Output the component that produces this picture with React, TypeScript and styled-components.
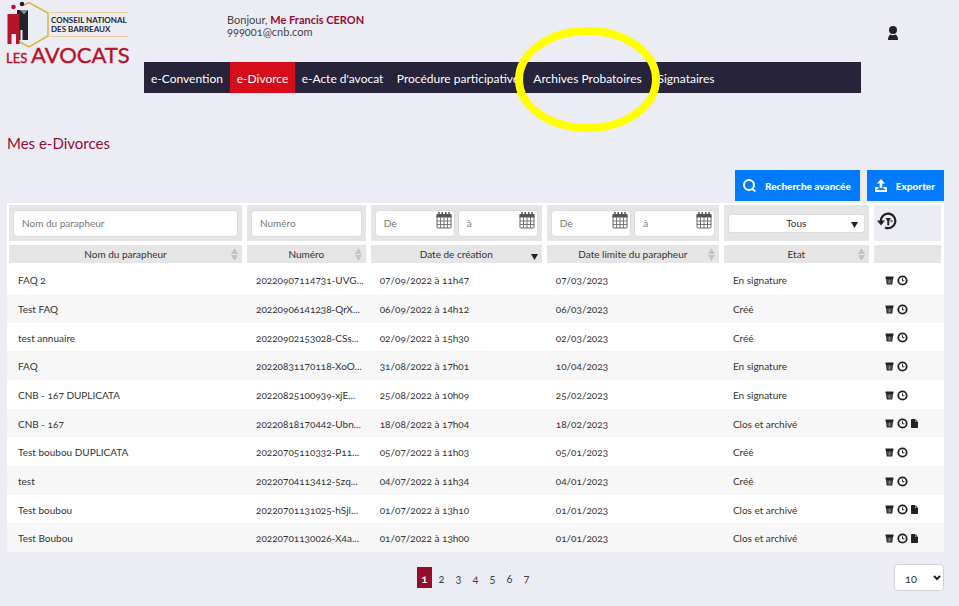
import React from "react";
import styled, { createGlobalStyle } from "styled-components";

const GlobalStyle = createGlobalStyle`
  * { box-sizing: border-box; }
  body {
    margin: 0;
    background: #ececf5;
    color: #333;
    font-family: Lato, "Noto Sans", sans-serif;
    font-size: 10px;
    font-variant-numeric: oldstyle-nums;
  }
  button, input, select { font: inherit; color: inherit; }
`;

const Page = styled.div`
  padding: 0 15px 0 7px;
`;

const Header = styled.header`
  display: flex;
  align-items: flex-start;
  height: 62px;
`;

const Logo = styled.a`
  width: 122px;
  margin-right: 98px;
  flex: none;
`;

const LogoDrawing = styled.svg`
  display: block;
  overflow: visible;
`;

const Greeting = styled.div`
  margin-top: 14px;
  flex: 1;
  color: #444;
  font-size: 11px;
  line-height: 12px;
  strong { color: #970b33; }
`;

const UserButton = styled.button`
  margin: 26px 46px 0 0;
  padding: 0;
  border: 0;
  background: none;
  line-height: 0;
`;

const Nav = styled.nav`
  display: flex;
  height: 31px;
  margin: 0 83px 0 137px;
  background: #26233b;
`;

const NavLink = styled.a<{ $width: number; $active?: boolean }>`
  position: relative;
  display: flex;
  flex: 0 0 ${(p) => p.$width}px;
  align-items: center;
  justify-content: center;
  padding-top: 2px;
  color: #fff;
  background: ${(p) => (p.$active ? "#d60d1b" : "transparent")};
  font-size: 12px;
  text-decoration: none;
  white-space: nowrap;
`;

const Highlight = styled.svg`
  position: absolute;
  z-index: 1;
  top: -35px;
  left: -11px;
  pointer-events: none;
`;

const Title = styled.h1`
  margin: 40px 0 17px;
  color: #970b33;
  font-size: 15px;
  font-weight: 400;
  line-height: 20px;
`;

const Toolbar = styled.div`
  display: flex;
  justify-content: flex-end;
  gap: 7px;
`;

const ActionButton = styled.button`
  display: flex;
  align-items: center;
  gap: 9px;
  height: 31px;
  padding: 0 9px 0 8px;
  border: 0;
  background: #007bff;
  color: #fff;
  font-weight: 900;
`;

const Table = styled.table`
  width: 100%;
  margin-top: 2px;
  border-spacing: 0;
  table-layout: fixed;
  background: #fff;
`;

const FilterCell = styled.td<{ $plain?: boolean }>`
  height: 40px;
  padding: 0 4px;
  border: solid #fff;
  border-width: 2px 3px 2px 2px;
  background: ${(p) => (p.$plain ? "#ececf5" : "#e5e5e5")};
`;

const HeadCell = styled.th`
  position: relative;
  height: 22px;
  padding: 0;
  border: solid #fff;
  border-width: 2px 3px 2px 2px;
  background: #e5e5e5;
  font-weight: 400;
  white-space: nowrap;
`;

const SortIcon = styled.svg`
  position: absolute;
  top: 3px;
  right: 4px;
`;

const Fields = styled.div`
  display: flex;
  gap: 3px;
`;

const Field = styled.label`
  position: relative;
  flex: 1;
  min-width: 0;
`;

const FieldInput = styled.input`
  display: block;
  width: 100%;
  height: 27px;
  padding: 0 8px;
  border: 1px solid #dcdcdc;
  border-radius: 4px;
  background: #fff;
  &::placeholder { color: #777; opacity: 1; }
`;

const CalendarIcon = styled.svg`
  position: absolute;
  top: 2px;
  right: 3px;
`;

const StateSelect = styled.select`
  display: block;
  width: 100%;
  height: 19px;
  padding: 0;
  border: 1px solid #dcdcdc;
  border-radius: 3px;
  background: #fff;
  appearance: none;
  text-align: center;
  text-align-last: center;
`;

const SelectArrow = styled.svg`
  position: absolute;
  top: 8px;
  right: 7px;
  pointer-events: none;
`;

const IconButton = styled.button`
  display: block;
  padding: 0;
  border: 0;
  background: none;
  line-height: 0;
`;

const ResetButton = styled(IconButton)`
  margin: 0 0 4px -1px;
`;

const Row = styled.tr`
  height: 29px;
  &:nth-child(3n) { height: 28px; }
  &:nth-child(even) { background: #f7f7f7; }
`;

const Cell = styled.td`
  padding: 1px 0 0 11px;
  overflow: hidden;
  white-space: nowrap;
`;

const Actions = styled.div`
  display: flex;
  gap: 3px;
  padding-left: 2px;
`;

const Footer = styled.footer`
  display: grid;
  grid-template-columns: 1fr auto 1fr;
  padding-top: 12px;
`;

const Pages = styled.nav`
  display: flex;
  gap: 2px;
  grid-column: 2;
  padding-top: 3px;
`;

const PageLink = styled.a<{ $current?: boolean }>`
  width: 15px;
  height: 21px;
  color: ${(p) => (p.$current ? "#fff" : "#444")};
  background: ${(p) => (p.$current ? "#970b2b" : "transparent")};
  font-size: 11px;
  font-weight: ${(p) => (p.$current ? 700 : 400)};
  line-height: 23px;
  text-align: center;
  text-decoration: none;
`;

const SizeSelect = styled.div`
  position: relative;
  justify-self: end;
  width: 50px;
  font-size: 11px;
  select {
    width: 100%;
    height: 27px;
    padding: 2px 10px 0;
    border: 1px solid #d2d2d8;
    border-radius: 4px;
    background: #fff;
    appearance: none;
  }
  svg { position: absolute; top: 11px; right: 3px; pointer-events: none; }
`;

const ink = "#222";

function LogoMark() {
  return (
    <LogoDrawing width="122" height="66" viewBox="7 0 122 66" role="img" aria-label="Conseil national des barreaux, Les Avocats">
      <path d="M24 5 29 2.500 48 13V36L29 47 18 41" fill="none" stroke="#dcb43c" strokeWidth="1.500" />
      <path d="M48 12.500H128M48 36.500H128" stroke="#e6d29a" />
      <path d="M17 10H28V40H22.500V30H20.500V40H17Z" fill="#24222b" />
      <path d="M20 10 24 14.500 28 10Z" fill="#8b8890" />
      <path d="M7.500 14H19.500V44H16V34H11.500V44H7.500Z" fill="#b5152b" />
      <circle cx="13.500" cy="7" r="2.300" fill="#b5152b" />
      <circle cx="22" cy="4" r="2.300" fill="#24222b" />
      <g fontFamily="Lato, sans-serif" fontWeight="700" fill="#26242c" fontSize="8">
        <text x="51" y="23">CONSEIL NATIONAL</text>
        <text x="51" y="32">DES BARREAUX</text>
      </g>
      <g fontFamily="Lato, sans-serif" fill="#b5152b" stroke="#b5152b" strokeWidth=".4">
        <text x="6" y="63" fontSize="13">LES</text>
        <text x="31" y="63" fontSize="22">AVOCATS</text>
      </g>
    </LogoDrawing>
  );
}

function Calendar() {
  return (
    <CalendarIcon width="16" height="17" viewBox="0 0 16 17" aria-hidden="true">
      <rect x="1" y="3" width="14" height="13" rx="1" fill="#fff" stroke="#666" />
      <path d="M.5 2H15.500V5.500H.5Z" fill="#555" />
      <path d="M3 0V3M6.300 0V3M9.700 0V3M13 0V3" stroke="#555" strokeWidth="1.500" />
      <path d="M4.500 5V16M8 5V16M11.500 5V16M1 9H15M1 12.500H15" stroke="#777" />
    </CalendarIcon>
  );
}

function DateRange({ name }: { name: string }) {
  return (
    <Fields>
      {["De", "à"].map((text) => (
        <Field key={text}>
          <FieldInput placeholder={text} aria-label={`${name} ${text}`} />
          <Calendar />
        </Field>
      ))}
    </Fields>
  );
}

function Trash() {
  return (
    <svg width="9" height="11" viewBox="0 0 9 11" aria-hidden="true">
      <path d="M.5 1.500H8.500V3.500H8L7.300 9.500H1.700L1 3.500H.5Z" fill={ink} />
      <path d="M3 4.500 3.300 8.500M4.500 4.500V8.500M6 4.500 5.700 8.500" stroke="#bbb" strokeWidth=".6" />
    </svg>
  );
}

function Clock() {
  return (
    <svg width="11" height="11" viewBox="0 0 11 11" aria-hidden="true">
      <circle cx="5.500" cy="5.500" r="4.200" fill="none" stroke={ink} strokeWidth="1.800" />
      <path d="M5.500 3.300V5.800H7.300" fill="none" stroke={ink} />
    </svg>
  );
}

function FileIcon() {
  return (
    <svg width="7" height="11" viewBox="0 0 7 11" aria-hidden="true">
      <path d="M1 1H4V4H7V9.300Q7 10 6.300 10H.7Q0 10 0 9.300V1.800Q0 1 1 1ZM4.400 1 7 3.700H4.400Z" fill={ink} />
    </svg>
  );
}

const navItems = [
  { text: "e-Convention", width: 86 },
  { text: "e-Divorce", width: 65, active: true },
  { text: "e-Acte d'avocat", width: 95 },
  { text: "Procédure participative", width: 136 },
  { text: "Archives Probatoires", width: 123, highlight: true },
  { text: "Signataires", width: 74 },
];

const columns = [
  { name: "Nom du parapheur", width: "25.4%" },
  { name: "Numéro", width: "13.2%" },
  { name: "Date de création", width: "18.8%", sorted: true },
  { name: "Date limite du parapheur", width: "18.9%" },
  { name: "Etat", width: "16%" },
];

const rows = [
  ["FAQ 2", "20220907114731-UVG...", "07/09/2022 à 11h47", "07/03/2023", "En signature"],
  ["Test FAQ", "20220906141238-QrX...", "06/09/2022 à 14h12", "06/03/2023", "Créé"],
  ["test annuaire", "20220902153028-CSs...", "02/09/2022 à 15h30", "02/03/2023", "Créé"],
  ["FAQ", "20220831170118-XoO...", "31/08/2022 à 17h01", "10/04/2023", "En signature"],
  ["CNB - 167 DUPLICATA", "20220825100939-xjE...", "25/08/2022 à 10h09", "25/02/2023", "En signature"],
  ["CNB - 167", "20220818170442-Ubn...", "18/08/2022 à 17h04", "18/02/2023", "Clos et archivé"],
  ["Test boubou DUPLICATA", "20220705110332-P11...", "05/07/2022 à 11h03", "05/01/2023", "Créé"],
  ["test", "20220704113412-5zq...", "04/07/2022 à 11h34", "04/01/2023", "Créé"],
  ["Test boubou", "20220701131025-hSjl...", "01/07/2022 à 13h10", "01/01/2023", "Clos et archivé"],
  ["Test Boubou", "20220701130026-X4a...", "01/07/2022 à 13h00", "01/01/2023", "Clos et archivé"],
];

export default function App() {
  return (
    <Page>
      <GlobalStyle />
      <Header>
        <Logo href="#"><LogoMark /></Logo>
        <Greeting>
          <div>Bonjour, <strong>Me Francis CERON</strong></div>
          <div>999001@cnb.com</div>
        </Greeting>
        <UserButton aria-label="Mon compte">
          <svg width="10" height="15" viewBox="0 0 10 15">
            <circle cx="5" cy="4" r="4" fill={ink} />
            <path d="M0 14Q0 9.500 2.500 8.500Q5 10 7.500 8.500Q10 9.500 10 14Z" fill={ink} />
          </svg>
        </UserButton>
      </Header>
      <Nav>
        {navItems.map((item) => (
          <NavLink key={item.text} href="#" $width={item.width} $active={item.active}>
            {item.text}
            {item.highlight && (
              <Highlight width="145" height="105" viewBox="0 0 145 105" aria-hidden="true">
                <ellipse cx="72.500" cy="52.500" rx="68.500" ry="48.500" fill="none" stroke="#ff0" strokeWidth="8" />
              </Highlight>
            )}
          </NavLink>
        ))}
      </Nav>
      <main>
        <Title>Mes e-Divorces</Title>
        <Toolbar>
          <ActionButton>
            <svg width="13" height="13" viewBox="0 0 13 13" aria-hidden="true">
              <circle cx="6" cy="6" r="5" fill="none" stroke="#fff" strokeWidth="2" />
              <path d="M9 9.500 12.300 12.500" stroke="#fff" strokeWidth="2" />
            </svg>
            Recherche avancée
          </ActionButton>
          <ActionButton>
            <svg width="12" height="13" viewBox="0 0 12 13" aria-hidden="true">
              <path d="M6 0 10 4.500H7.300V9H4.700V4.500H2Z" fill="#fff" />
              <path d="M3.500 9H1V12H11V9H8.500" fill="none" stroke="#fff" strokeWidth="2" />
            </svg>
            Exporter
          </ActionButton>
        </Toolbar>
        <Table>
          <colgroup>
            {columns.map((c) => <col key={c.name} width={c.width} />)}
            <col />
          </colgroup>
          <thead>
            <tr>
              <FilterCell><FieldInput placeholder="Nom du parapheur" aria-label="Nom du parapheur" /></FilterCell>
              <FilterCell><FieldInput placeholder="Numéro" aria-label="Numéro" /></FilterCell>
              <FilterCell><DateRange name="Date de création" /></FilterCell>
              <FilterCell><DateRange name="Date limite" /></FilterCell>
              <FilterCell>
                <Fields>
                  <Field>
                    <StateSelect aria-label="Etat"><option>Tous</option></StateSelect>
                    <SelectArrow width="7" height="6" viewBox="0 0 7 6"><path d="M0 0H7L3.500 6Z" fill={ink} /></SelectArrow>
                  </Field>
                </Fields>
              </FilterCell>
              <FilterCell $plain>
                <ResetButton aria-label="Réinitialiser les filtres">
                  <svg width="20" height="18" viewBox="0 0 20 18">
                    <path d="M4 10A7.200 7.200 0 1 1 8 15.400" fill="none" stroke={ink} strokeWidth="2.200" />
                    <path d="M0 8.500H8L4 13.500Z" fill={ink} />
                    <path d="M8.500 6H14L12.200 9V13.500H10.300V9Z" fill={ink} />
                    <path d="M13.500 8 15.500 10M15.500 8 13.500 10" stroke={ink} strokeWidth=".8" />
                  </svg>
                </ResetButton>
              </FilterCell>
            </tr>
            <tr>
              {columns.map((c) => (
                <HeadCell key={c.name} scope="col">
                  {c.name}
                  <SortIcon width="7" height="13" viewBox="0 0 7 13" aria-hidden="true">
                    {c.sorted
                      ? <path d="M0 6H7L3.500 12Z" fill={ink} />
                      : <path d="M0 6 3.500 0 7 6ZM0 7H7L3.500 13Z" fill="#c4c4c4" />}
                  </SortIcon>
                </HeadCell>
              ))}
              <HeadCell aria-label="Actions" />
            </tr>
          </thead>
          <tbody>
            {rows.map((row) => (
              <Row key={row[1]}>
                {row.map((value, i) => <Cell key={i}>{value}</Cell>)}
                <Cell>
                  <Actions>
                    <IconButton aria-label="Supprimer"><Trash /></IconButton>
                    <IconButton aria-label="Historique"><Clock /></IconButton>
                    {row[4] === "Clos et archivé" && <IconButton aria-label="Document"><FileIcon /></IconButton>}
                  </Actions>
                </Cell>
              </Row>
            ))}
          </tbody>
        </Table>
      </main>
      <Footer>
        <Pages aria-label="Pagination">
          {[1, 2, 3, 4, 5, 6, 7].map((n) => <PageLink key={n} href="#" $current={n === 1}>{n}</PageLink>)}
        </Pages>
        <SizeSelect>
          <select aria-label="Lignes par page"><option>10</option></select>
          <svg width="8" height="6" viewBox="0 0 8 6"><path d="M1 1 4 4 7 1" fill="none" stroke={ink} strokeWidth="2" /></svg>
        </SizeSelect>
      </Footer>
    </Page>
  );
}
